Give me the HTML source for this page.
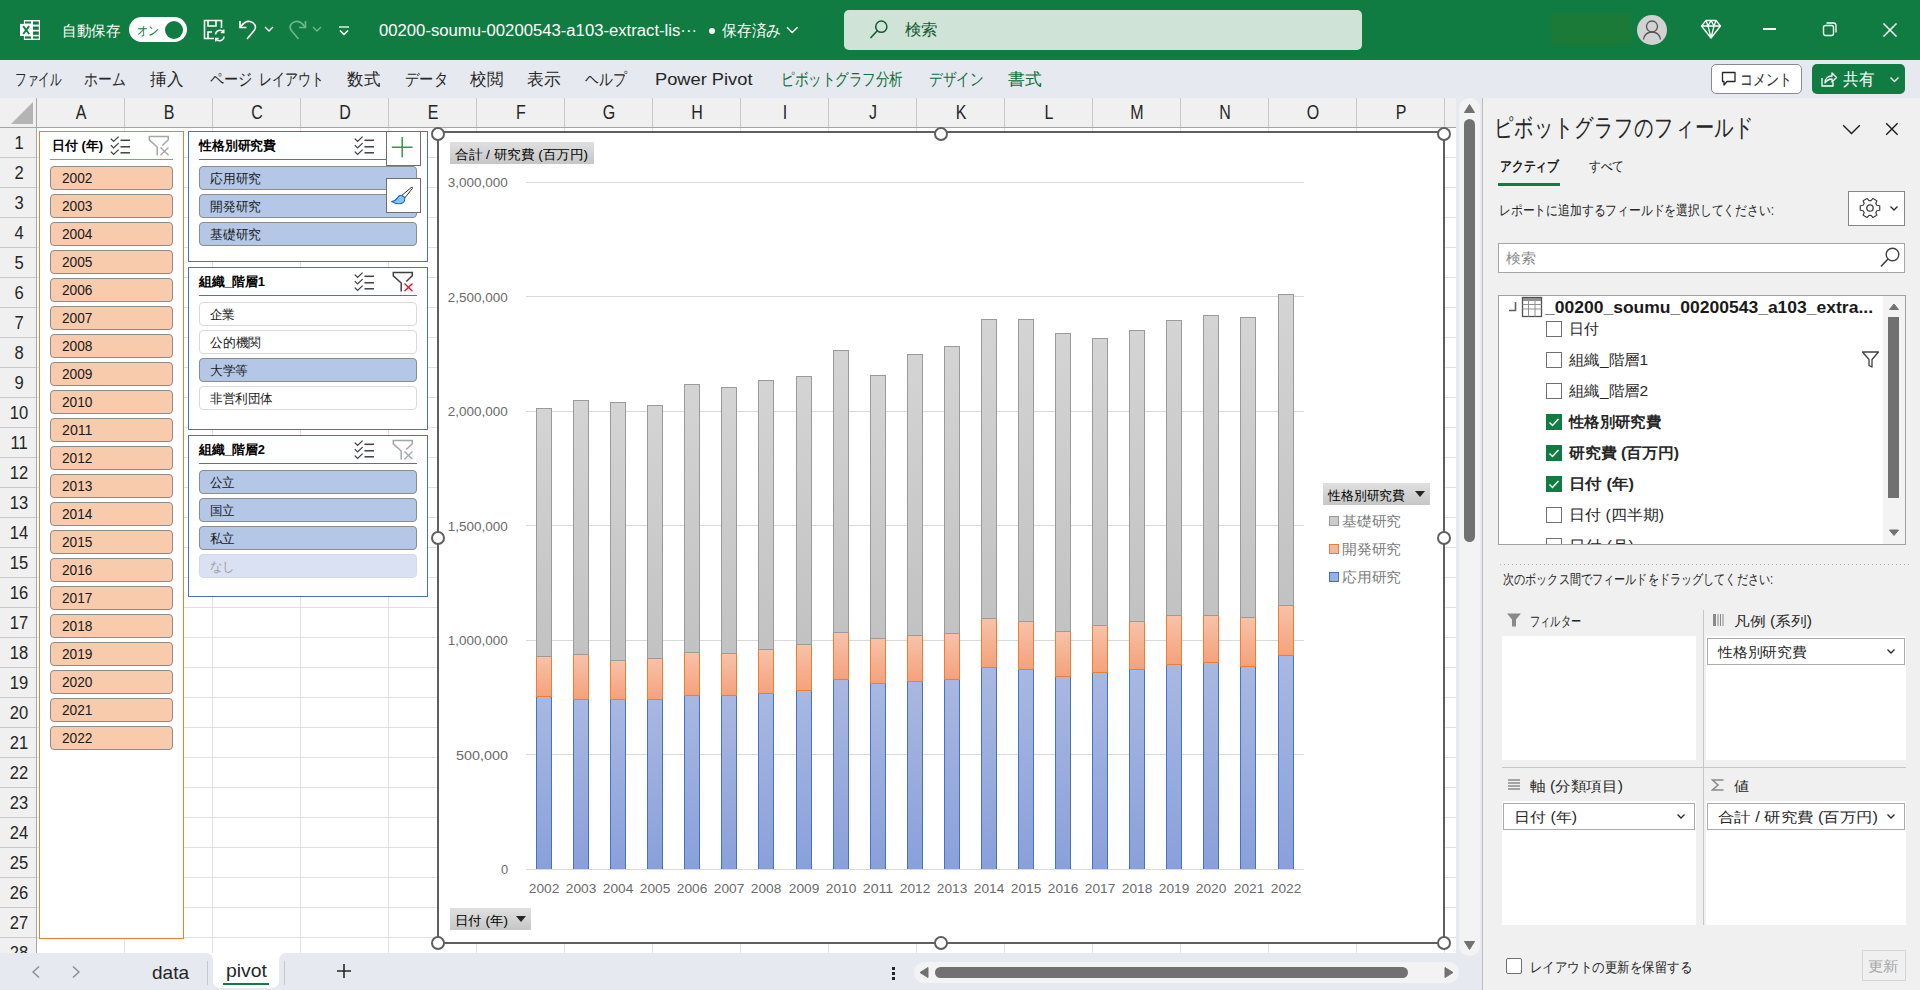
<!DOCTYPE html>
<html lang="ja"><head><meta charset="utf-8"><title>Excel pivot</title>
<style>
html,body{margin:0;padding:0;width:1920px;height:990px;overflow:hidden;background:#fff;font-family:'Liberation Sans', sans-serif;}
body>div{position:absolute;box-sizing:border-box;}
.t{white-space:nowrap;}
.t span{white-space:nowrap;}
</style></head><body>
<div style="left:0px;top:0px;width:1920px;height:60px;background:#117C41"></div>
<div style="left:0px;top:60px;width:1920px;height:38px;background:#E6E9EF"></div>
<div style="left:37px;top:128px;width:1419px;height:825px;background-color:#fff;background-image:repeating-linear-gradient(to right,transparent 0 87px,#E1E1E1 87px 88px),repeating-linear-gradient(to bottom,transparent 0 29px,#E1E1E1 29px 30px)"></div>
<div style="left:0px;top:98px;width:1456px;height:30px;background:#F0F0F0"></div>
<div style="left:37px;top:98px;width:1419px;height:29px;background-image:repeating-linear-gradient(to right,transparent 0 87px,#C8C8C8 87px 88px)"></div>
<div style="left:0px;top:127px;width:1456px;height:1px;background:#A6A6A6"></div>
<div style="left:0px;top:128px;width:36px;height:825px;background-color:#F0F0F0;background-image:repeating-linear-gradient(to bottom,transparent 0 29px,#C8C8C8 29px 30px)"></div>
<div style="left:36px;top:98px;width:1px;height:855px;background:#A6A6A6"></div>
<svg style="position:absolute;left:11px;top:102px;" width="23" height="23" viewBox="0 0 23 23"><path d="M22 0 L22 22 L0 22 Z" fill="#B4B4B4"/></svg>
<div id="t0" class="t" style="left:81px;width:0;display:flex;justify-content:center;top:99.0px;line-height:26px;font-size:20px;color:#262626;font-weight:normal;transform:scaleX(0.8)"><span>A</span></div>
<div id="t1" class="t" style="left:169px;width:0;display:flex;justify-content:center;top:99.0px;line-height:26px;font-size:20px;color:#262626;font-weight:normal;transform:scaleX(0.8)"><span>B</span></div>
<div id="t2" class="t" style="left:257px;width:0;display:flex;justify-content:center;top:99.0px;line-height:26px;font-size:20px;color:#262626;font-weight:normal;transform:scaleX(0.8)"><span>C</span></div>
<div id="t3" class="t" style="left:345px;width:0;display:flex;justify-content:center;top:99.0px;line-height:26px;font-size:20px;color:#262626;font-weight:normal;transform:scaleX(0.8)"><span>D</span></div>
<div id="t4" class="t" style="left:433px;width:0;display:flex;justify-content:center;top:99.0px;line-height:26px;font-size:20px;color:#262626;font-weight:normal;transform:scaleX(0.8)"><span>E</span></div>
<div id="t5" class="t" style="left:521px;width:0;display:flex;justify-content:center;top:99.0px;line-height:26px;font-size:20px;color:#262626;font-weight:normal;transform:scaleX(0.8)"><span>F</span></div>
<div id="t6" class="t" style="left:609px;width:0;display:flex;justify-content:center;top:99.0px;line-height:26px;font-size:20px;color:#262626;font-weight:normal;transform:scaleX(0.8)"><span>G</span></div>
<div id="t7" class="t" style="left:697px;width:0;display:flex;justify-content:center;top:99.0px;line-height:26px;font-size:20px;color:#262626;font-weight:normal;transform:scaleX(0.8)"><span>H</span></div>
<div id="t8" class="t" style="left:785px;width:0;display:flex;justify-content:center;top:99.0px;line-height:26px;font-size:20px;color:#262626;font-weight:normal;transform:scaleX(0.8)"><span>I</span></div>
<div id="t9" class="t" style="left:873px;width:0;display:flex;justify-content:center;top:99.0px;line-height:26px;font-size:20px;color:#262626;font-weight:normal;transform:scaleX(0.8)"><span>J</span></div>
<div id="t10" class="t" style="left:961px;width:0;display:flex;justify-content:center;top:99.0px;line-height:26px;font-size:20px;color:#262626;font-weight:normal;transform:scaleX(0.8)"><span>K</span></div>
<div id="t11" class="t" style="left:1049px;width:0;display:flex;justify-content:center;top:99.0px;line-height:26px;font-size:20px;color:#262626;font-weight:normal;transform:scaleX(0.8)"><span>L</span></div>
<div id="t12" class="t" style="left:1137px;width:0;display:flex;justify-content:center;top:99.0px;line-height:26px;font-size:20px;color:#262626;font-weight:normal;transform:scaleX(0.8)"><span>M</span></div>
<div id="t13" class="t" style="left:1225px;width:0;display:flex;justify-content:center;top:99.0px;line-height:26px;font-size:20px;color:#262626;font-weight:normal;transform:scaleX(0.8)"><span>N</span></div>
<div id="t14" class="t" style="left:1313px;width:0;display:flex;justify-content:center;top:99.0px;line-height:26px;font-size:20px;color:#262626;font-weight:normal;transform:scaleX(0.8)"><span>O</span></div>
<div id="t15" class="t" style="left:1401px;width:0;display:flex;justify-content:center;top:99.0px;line-height:26px;font-size:20px;color:#262626;font-weight:normal;transform:scaleX(0.8)"><span>P</span></div>
<div id="t16" class="t" style="left:18.5px;width:0;display:flex;justify-content:center;top:132.0px;line-height:23px;font-size:18px;color:#262626;font-weight:normal;transform:scaleX(0.92)"><span>1</span></div>
<div id="t17" class="t" style="left:18.5px;width:0;display:flex;justify-content:center;top:162.0px;line-height:23px;font-size:18px;color:#262626;font-weight:normal;transform:scaleX(0.92)"><span>2</span></div>
<div id="t18" class="t" style="left:18.5px;width:0;display:flex;justify-content:center;top:192.0px;line-height:23px;font-size:18px;color:#262626;font-weight:normal;transform:scaleX(0.92)"><span>3</span></div>
<div id="t19" class="t" style="left:18.5px;width:0;display:flex;justify-content:center;top:222.0px;line-height:23px;font-size:18px;color:#262626;font-weight:normal;transform:scaleX(0.92)"><span>4</span></div>
<div id="t20" class="t" style="left:18.5px;width:0;display:flex;justify-content:center;top:252.0px;line-height:23px;font-size:18px;color:#262626;font-weight:normal;transform:scaleX(0.92)"><span>5</span></div>
<div id="t21" class="t" style="left:18.5px;width:0;display:flex;justify-content:center;top:282.0px;line-height:23px;font-size:18px;color:#262626;font-weight:normal;transform:scaleX(0.92)"><span>6</span></div>
<div id="t22" class="t" style="left:18.5px;width:0;display:flex;justify-content:center;top:312.0px;line-height:23px;font-size:18px;color:#262626;font-weight:normal;transform:scaleX(0.92)"><span>7</span></div>
<div id="t23" class="t" style="left:18.5px;width:0;display:flex;justify-content:center;top:342.0px;line-height:23px;font-size:18px;color:#262626;font-weight:normal;transform:scaleX(0.92)"><span>8</span></div>
<div id="t24" class="t" style="left:18.5px;width:0;display:flex;justify-content:center;top:372.0px;line-height:23px;font-size:18px;color:#262626;font-weight:normal;transform:scaleX(0.92)"><span>9</span></div>
<div id="t25" class="t" style="left:18.5px;width:0;display:flex;justify-content:center;top:402.0px;line-height:23px;font-size:18px;color:#262626;font-weight:normal;transform:scaleX(0.92)"><span>10</span></div>
<div id="t26" class="t" style="left:18.5px;width:0;display:flex;justify-content:center;top:432.0px;line-height:23px;font-size:18px;color:#262626;font-weight:normal;transform:scaleX(0.92)"><span>11</span></div>
<div id="t27" class="t" style="left:18.5px;width:0;display:flex;justify-content:center;top:462.0px;line-height:23px;font-size:18px;color:#262626;font-weight:normal;transform:scaleX(0.92)"><span>12</span></div>
<div id="t28" class="t" style="left:18.5px;width:0;display:flex;justify-content:center;top:492.0px;line-height:23px;font-size:18px;color:#262626;font-weight:normal;transform:scaleX(0.92)"><span>13</span></div>
<div id="t29" class="t" style="left:18.5px;width:0;display:flex;justify-content:center;top:522.0px;line-height:23px;font-size:18px;color:#262626;font-weight:normal;transform:scaleX(0.92)"><span>14</span></div>
<div id="t30" class="t" style="left:18.5px;width:0;display:flex;justify-content:center;top:552.0px;line-height:23px;font-size:18px;color:#262626;font-weight:normal;transform:scaleX(0.92)"><span>15</span></div>
<div id="t31" class="t" style="left:18.5px;width:0;display:flex;justify-content:center;top:582.0px;line-height:23px;font-size:18px;color:#262626;font-weight:normal;transform:scaleX(0.92)"><span>16</span></div>
<div id="t32" class="t" style="left:18.5px;width:0;display:flex;justify-content:center;top:612.0px;line-height:23px;font-size:18px;color:#262626;font-weight:normal;transform:scaleX(0.92)"><span>17</span></div>
<div id="t33" class="t" style="left:18.5px;width:0;display:flex;justify-content:center;top:642.0px;line-height:23px;font-size:18px;color:#262626;font-weight:normal;transform:scaleX(0.92)"><span>18</span></div>
<div id="t34" class="t" style="left:18.5px;width:0;display:flex;justify-content:center;top:672.0px;line-height:23px;font-size:18px;color:#262626;font-weight:normal;transform:scaleX(0.92)"><span>19</span></div>
<div id="t35" class="t" style="left:18.5px;width:0;display:flex;justify-content:center;top:702.0px;line-height:23px;font-size:18px;color:#262626;font-weight:normal;transform:scaleX(0.92)"><span>20</span></div>
<div id="t36" class="t" style="left:18.5px;width:0;display:flex;justify-content:center;top:732.0px;line-height:23px;font-size:18px;color:#262626;font-weight:normal;transform:scaleX(0.92)"><span>21</span></div>
<div id="t37" class="t" style="left:18.5px;width:0;display:flex;justify-content:center;top:762.0px;line-height:23px;font-size:18px;color:#262626;font-weight:normal;transform:scaleX(0.92)"><span>22</span></div>
<div id="t38" class="t" style="left:18.5px;width:0;display:flex;justify-content:center;top:792.0px;line-height:23px;font-size:18px;color:#262626;font-weight:normal;transform:scaleX(0.92)"><span>23</span></div>
<div id="t39" class="t" style="left:18.5px;width:0;display:flex;justify-content:center;top:822.0px;line-height:23px;font-size:18px;color:#262626;font-weight:normal;transform:scaleX(0.92)"><span>24</span></div>
<div id="t40" class="t" style="left:18.5px;width:0;display:flex;justify-content:center;top:852.0px;line-height:23px;font-size:18px;color:#262626;font-weight:normal;transform:scaleX(0.92)"><span>25</span></div>
<div id="t41" class="t" style="left:18.5px;width:0;display:flex;justify-content:center;top:882.0px;line-height:23px;font-size:18px;color:#262626;font-weight:normal;transform:scaleX(0.92)"><span>26</span></div>
<div id="t42" class="t" style="left:18.5px;width:0;display:flex;justify-content:center;top:912.0px;line-height:23px;font-size:18px;color:#262626;font-weight:normal;transform:scaleX(0.92)"><span>27</span></div>
<div id="t43" class="t" style="left:18.5px;width:0;display:flex;justify-content:center;top:942.0px;line-height:23px;font-size:18px;color:#262626;font-weight:normal;transform:scaleX(0.92)"><span>28</span></div>
<div style="left:1456px;top:98px;width:26px;height:892px;background:#E6E9EF"></div>
<div style="left:1459px;top:98px;width:21px;height:858px;background:#F3F3F3;border-radius:10px"></div>
<div style="left:1464px;top:119px;width:11px;height:423px;background:#717171;border-radius:6px"></div>
<svg style="position:absolute;left:1463px;top:103px;" width="13" height="11" viewBox="0 0 13 11"><path d="M1.5 9.5 L6.5 1.5 L11.5 9.5 Z" fill="#717171" stroke="#717171" stroke-linejoin="round"/></svg>
<svg style="position:absolute;left:1463px;top:940px;" width="13" height="11" viewBox="0 0 13 11"><path d="M1.5 1.5 L6.5 9.5 L11.5 1.5 Z" fill="#717171" stroke="#717171" stroke-linejoin="round"/></svg>
<div style="left:0px;top:953px;width:213px;height:37px;background:#E6E9EF;border-top-right-radius:7px"></div>
<div style="left:279px;top:953px;width:1177px;height:37px;background:#E6E9EF;border-top-left-radius:7px"></div>
<div style="left:213px;top:953px;width:66px;height:37px;background:#E6E9EF"></div>
<svg style="position:absolute;left:20px;top:20px;" width="21" height="21" viewBox="0 0 21 21"><rect x="3.9" y="0" width="16.1" height="20" fill="#fff"/>
<rect x="0" y="3.9" width="11.8" height="12.1" fill="#fff"/>
<g fill="#117C41"><rect x="5" y="1.5" width="6" height="2"/><rect x="13" y="1.5" width="5.8" height="3.1"/><rect x="13" y="6.5" width="5.8" height="3.3"/><rect x="13" y="11.5" width="5.8" height="3.3"/><rect x="5" y="16.4" width="6" height="2.2"/><rect x="13" y="16.4" width="5.8" height="2.2"/></g>
<path d="M3.2 6.2 L9.2 14 M9.2 6.2 L3.2 14" stroke="#117C41" stroke-width="1.9"/></svg>
<div id="t44" class="t" style="left:62px;top:20.5px;line-height:20px;font-size:15px;color:#fff;font-weight:normal;transform:scaleX(0.9667);transform-origin:0 50%;"><span>自動保存</span></div>
<div style="left:129px;top:17px;width:58px;height:25px;background:#fff;border-radius:13px"></div>
<div style="left:165px;top:21px;width:18px;height:18px;background:#117C41;border-radius:50%"></div>
<div id="t45" class="t" style="left:137px;top:22.0px;line-height:17px;font-size:13px;color:#117C41;font-weight:normal;transform:scaleX(0.8462);transform-origin:0 50%;"><span>オン</span></div>
<svg style="position:absolute;left:202px;top:19px;" width="24" height="23" viewBox="0 0 24 23"><path d="M12 19.5 H2.5 V1.5 H19.5 V9" fill="none" stroke="#fff" stroke-width="1.6"/>
<path d="M6 1.5 V7 H14 V1.5" fill="none" stroke="#fff" stroke-width="1.6"/>
<path d="M6 19.5 V13 H10" fill="none" stroke="#fff" stroke-width="1.6"/>
<path d="M13.5 15.5 A4.5 4.5 0 0 1 21.5 13 M22 17.5 A4.5 4.5 0 0 1 14 20" fill="none" stroke="#fff" stroke-width="1.5"/>
<path d="M21.8 10.5 V13.5 H18.8 M13.7 22.5 V19.5 H16.7" fill="none" stroke="#fff" stroke-width="1.4"/></svg>
<svg style="position:absolute;left:237px;top:18px;" width="24" height="24" viewBox="0 0 24 24"><path d="M3 3 V9.5 H9.5" fill="none" stroke="#fff" stroke-width="1.6"/>
<path d="M3.5 9 C7 4 10 3 13 3.5 C17 4.5 20 8 17.5 12 L10 21" fill="none" stroke="#fff" stroke-width="1.6"/></svg>
<svg style="position:absolute;left:264px;top:25px;" width="10" height="8" viewBox="0 0 10 8"><path d="M1 2 L5 6 L9 2" fill="none" stroke="#fff" stroke-width="1.4"/></svg>
<svg style="position:absolute;left:285px;top:18px;" width="24" height="24" viewBox="0 0 24 24"><path d="M20.5 3 V9.5 H14" fill="none" stroke="#6FB68E" stroke-width="1.6"/>
<path d="M20 9 C16.5 4 13.5 3 10.5 3.5 C6.5 4.5 3.5 8 6 12 L13.5 21" fill="none" stroke="#6FB68E" stroke-width="1.6"/></svg>
<svg style="position:absolute;left:312px;top:25px;" width="10" height="8" viewBox="0 0 10 8"><path d="M1 2 L5 6 L9 2" fill="none" stroke="#6FB68E" stroke-width="1.4"/></svg>
<svg style="position:absolute;left:338px;top:26px;" width="12" height="10" viewBox="0 0 12 10"><path d="M1 1 H11" stroke="#fff" stroke-width="1.3"/><path d="M2 4.5 L6 8.5 L10 4.5" fill="none" stroke="#fff" stroke-width="1.4"/></svg>
<div id="t46" class="t" style="left:379px;top:20.0px;line-height:21px;font-size:16px;color:#fff;font-weight:normal;transform:scaleX(1.0425);transform-origin:0 50%;"><span>00200-soumu-00200543-a103-extract-lis···</span></div>
<div style="left:709px;top:27.5px;width:6.2px;height:6.2px;background:#fff;border-radius:50%"></div>
<div id="t47" class="t" style="left:721.5px;top:20.5px;line-height:20px;font-size:15.5px;color:#fff;font-weight:normal;transform:scaleX(0.9219);transform-origin:0 50%;"><span>保存済み</span></div>
<svg style="position:absolute;left:786px;top:26px;" width="13" height="9" viewBox="0 0 13 9"><path d="M1 1.2 L6.2 6.5 L11.6 1.2" fill="none" stroke="#fff" stroke-width="1.4"/></svg>
<div style="left:844px;top:10px;width:518px;height:40px;background:#CFE4D7;border-radius:5px"></div>
<svg style="position:absolute;left:868px;top:18px;" width="22" height="22" viewBox="0 0 22 22"><circle cx="13.3" cy="8.7" r="5.6" fill="none" stroke="#165A32" stroke-width="1.5"/><path d="M9.3 12.7 L2.5 20" stroke="#165A32" stroke-width="1.6"/></svg>
<div id="t48" class="t" style="left:905px;top:19.0px;line-height:21px;font-size:16px;color:#165A32;font-weight:normal;transform:scaleX(1.0312);transform-origin:0 50%;"><span>検索</span></div>
<div style="left:1551px;top:14px;width:80px;height:31px;background:#1B7A37"></div>
<div style="left:1637px;top:15px;width:30px;height:30px;background:#D2D2D2;border-radius:50%"></div>
<svg style="position:absolute;left:1637px;top:15px;" width="30" height="30" viewBox="0 0 30 30"><circle cx="15" cy="11.5" r="5.5" fill="none" stroke="#555" stroke-width="1.3"/><path d="M6.5 24.5 C7.5 19 11 17 15 17 C19 17 22.5 19 23.5 24.5" fill="none" stroke="#555" stroke-width="1.3"/></svg>
<svg style="position:absolute;left:1700px;top:19px;" width="22" height="21" viewBox="0 0 22 21"><path d="M1.5 7 L6 1.5 H16 L20.5 7 L11 19 Z M1.5 7 H20.5 M6 1.5 L8 7 L11 19 L14 7 L16 1.5 M11 1.5 L8 7 M11 1.5 L14 7" fill="none" stroke="#fff" stroke-width="1.3" stroke-linejoin="round"/></svg>
<div style="left:1763px;top:28px;width:13px;height:1.5px;background:#fff"></div>
<svg style="position:absolute;left:1822px;top:21px;" width="16" height="17" viewBox="0 0 16 17"><rect x="1.5" y="4.5" width="10" height="10" rx="2" fill="none" stroke="#fff" stroke-width="1.4"/><path d="M4.5 2 H11.5 Q14 2 14 4.5 V11.5" fill="none" stroke="#fff" stroke-width="1.3"/></svg>
<svg style="position:absolute;left:1882px;top:22px;" width="16" height="16" viewBox="0 0 16 16"><path d="M1.5 1.5 L14.5 14.5 M14.5 1.5 L1.5 14.5" stroke="#fff" stroke-width="1.5"/></svg>
<div id="t49" class="t" style="left:15px;top:68.5px;line-height:22px;font-size:17px;color:#262626;font-weight:normal;transform:scaleX(0.6838);transform-origin:0 50%;"><span>ファイル</span></div>
<div id="t50" class="t" style="left:84px;top:68.5px;line-height:22px;font-size:17px;color:#262626;font-weight:normal;transform:scaleX(0.8137);transform-origin:0 50%;"><span>ホーム</span></div>
<div id="t51" class="t" style="left:150px;top:68.5px;line-height:22px;font-size:17px;color:#262626;font-weight:normal;transform:scaleX(0.9706);transform-origin:0 50%;"><span>挿入</span></div>
<div id="t52" class="t" style="left:209.5px;top:68.5px;line-height:22px;font-size:17px;color:#262626;font-weight:normal;transform:scaleX(0.8333);transform-origin:0 50%;"><span>ページ</span></div>
<div id="t53" class="t" style="left:258.5px;top:68.5px;line-height:22px;font-size:17px;color:#262626;font-weight:normal;transform:scaleX(0.7647);transform-origin:0 50%;"><span>レイアウト</span></div>
<div id="t54" class="t" style="left:347px;top:68.5px;line-height:22px;font-size:17px;color:#262626;font-weight:normal;transform:scaleX(0.9706);transform-origin:0 50%;"><span>数式</span></div>
<div id="t55" class="t" style="left:404.5px;top:68.5px;line-height:22px;font-size:17px;color:#262626;font-weight:normal;transform:scaleX(0.8431);transform-origin:0 50%;"><span>データ</span></div>
<div id="t56" class="t" style="left:470px;top:68.5px;line-height:22px;font-size:17px;color:#262626;font-weight:normal;transform:scaleX(0.9706);transform-origin:0 50%;"><span>校閲</span></div>
<div id="t57" class="t" style="left:527px;top:68.5px;line-height:22px;font-size:17px;color:#262626;font-weight:normal;transform:scaleX(0.9853);transform-origin:0 50%;"><span>表示</span></div>
<div id="t58" class="t" style="left:585px;top:68.5px;line-height:22px;font-size:17px;color:#262626;font-weight:normal;transform:scaleX(0.8137);transform-origin:0 50%;"><span>ヘルプ</span></div>
<div id="t59" class="t" style="left:655px;top:68.5px;line-height:22px;font-size:17px;color:#262626;font-weight:normal;transform:scaleX(1.0749);transform-origin:0 50%;"><span>Power Pivot</span></div>
<div id="t60" class="t" style="left:780.5px;top:68.5px;line-height:22px;font-size:17px;color:#0C6E38;font-weight:normal;transform:scaleX(0.7974);transform-origin:0 50%;"><span>ピボットグラフ分析</span></div>
<div id="t61" class="t" style="left:929px;top:68.5px;line-height:22px;font-size:17px;color:#0C6E38;font-weight:normal;transform:scaleX(0.8015);transform-origin:0 50%;"><span>デザイン</span></div>
<div id="t62" class="t" style="left:1008px;top:68.5px;line-height:22px;font-size:17px;color:#0C6E38;font-weight:normal;transform:scaleX(0.9853);transform-origin:0 50%;"><span>書式</span></div>
<div style="left:1711px;top:64px;width:91px;height:30px;background:#fff;border:1px solid #8A8A8A;border-radius:5px"></div>
<svg style="position:absolute;left:1720px;top:70px;" width="18" height="18" viewBox="0 0 18 18"><path d="M2.5 2.5 H15 V11.5 H7 L4 15 V11.5 H2.5 Z" fill="none" stroke="#262626" stroke-width="1.3" stroke-linejoin="round"/></svg>
<div id="t63" class="t" style="left:1740px;top:69.0px;line-height:21px;font-size:16px;color:#262626;font-weight:normal;transform:scaleX(0.8125);transform-origin:0 50%;"><span>コメント</span></div>
<div style="left:1812px;top:64px;width:93px;height:30px;background:#117C41;border-radius:5px"></div>
<svg style="position:absolute;left:1820px;top:70px;" width="18" height="18" viewBox="0 0 18 18"><path d="M2 8 V16 H13 V12" fill="none" stroke="#fff" stroke-width="1.3"/><path d="M5 13 C5 8 8 6 12 6 V3 L16.5 7.5 L12 12 V9 C9 9 7 10 5 13 Z" fill="none" stroke="#fff" stroke-width="1.3" stroke-linejoin="round"/></svg>
<div id="t64" class="t" style="left:1843px;top:68.5px;line-height:22px;font-size:17px;color:#fff;font-weight:normal;transform:scaleX(0.9118);transform-origin:0 50%;"><span>共有</span></div>
<svg style="position:absolute;left:1889px;top:76px;" width="11" height="8" viewBox="0 0 11 8"><path d="M1.5 1.5 L5.5 5.5 L9.5 1.5" fill="none" stroke="#fff" stroke-width="1.4"/></svg>
<div style="left:39px;top:131px;width:145px;height:808px;background:#fff;border:1px solid #ED7D31"></div>
<div id="t65" class="t" style="left:51.5px;top:136.8px;line-height:17px;font-size:13px;color:#000;font-weight:bold;transform:scaleX(0.9945);transform-origin:0 50%;"><span>日付 (年)</span></div>
<svg style="position:absolute;left:110px;top:136px;" width="21" height="20" viewBox="0 0 21 20"><g fill="none" stroke="#404040" stroke-width="1.3"><path d="M0.8 2.6 L3.6 5.4 L8.6 0.6"/><path d="M0.8 9.1 L3.6 11.9 L8.6 7.1"/><path d="M0.8 15.6 L3.6 18.4 L8.6 13.6"/></g><g stroke="#404040" stroke-width="1.5"><path d="M10.5 4.3 H20"/><path d="M10.5 10.8 H20"/><path d="M10.5 16.8 H20"/></g></svg>
<svg style="position:absolute;left:148px;top:135px;" width="22" height="22" viewBox="0 0 22 22"><path d="M14.3 10.5 L20.3 4.8 V1.5 H1.3 V4.8 L9.2 12 V20.5" fill="none" stroke="#A6A6A6" stroke-width="1.5" stroke-linejoin="miter"/><path d="M12.5 12.5 L20.5 20.3 M20.5 12.5 L12.5 20.3" stroke="#A6A6A6" stroke-width="1.3"/></svg>
<div style="left:50px;top:159px;width:123px;height:1px;background:#ED7D31"></div>
<div style="left:50px;top:166px;width:123px;height:24px;background:#F8CBAD;border:1px solid #8C8C8C;border-radius:4px"></div>
<div id="t66" class="t" style="left:61.5px;top:169.0px;line-height:19px;font-size:14.5px;color:#1A1A1A;font-weight:normal;transform:scaleX(0.9453);transform-origin:0 50%;"><span>2002</span></div>
<div style="left:50px;top:194px;width:123px;height:24px;background:#F8CBAD;border:1px solid #8C8C8C;border-radius:4px"></div>
<div id="t67" class="t" style="left:61.5px;top:197.0px;line-height:19px;font-size:14.5px;color:#1A1A1A;font-weight:normal;transform:scaleX(0.9453);transform-origin:0 50%;"><span>2003</span></div>
<div style="left:50px;top:222px;width:123px;height:24px;background:#F8CBAD;border:1px solid #8C8C8C;border-radius:4px"></div>
<div id="t68" class="t" style="left:61.5px;top:225.0px;line-height:19px;font-size:14.5px;color:#1A1A1A;font-weight:normal;transform:scaleX(0.9453);transform-origin:0 50%;"><span>2004</span></div>
<div style="left:50px;top:250px;width:123px;height:24px;background:#F8CBAD;border:1px solid #8C8C8C;border-radius:4px"></div>
<div id="t69" class="t" style="left:61.5px;top:253.0px;line-height:19px;font-size:14.5px;color:#1A1A1A;font-weight:normal;transform:scaleX(0.9453);transform-origin:0 50%;"><span>2005</span></div>
<div style="left:50px;top:278px;width:123px;height:24px;background:#F8CBAD;border:1px solid #8C8C8C;border-radius:4px"></div>
<div id="t70" class="t" style="left:61.5px;top:281.0px;line-height:19px;font-size:14.5px;color:#1A1A1A;font-weight:normal;transform:scaleX(0.9453);transform-origin:0 50%;"><span>2006</span></div>
<div style="left:50px;top:306px;width:123px;height:24px;background:#F8CBAD;border:1px solid #8C8C8C;border-radius:4px"></div>
<div id="t71" class="t" style="left:61.5px;top:309.0px;line-height:19px;font-size:14.5px;color:#1A1A1A;font-weight:normal;transform:scaleX(0.9453);transform-origin:0 50%;"><span>2007</span></div>
<div style="left:50px;top:334px;width:123px;height:24px;background:#F8CBAD;border:1px solid #8C8C8C;border-radius:4px"></div>
<div id="t72" class="t" style="left:61.5px;top:337.0px;line-height:19px;font-size:14.5px;color:#1A1A1A;font-weight:normal;transform:scaleX(0.9453);transform-origin:0 50%;"><span>2008</span></div>
<div style="left:50px;top:362px;width:123px;height:24px;background:#F8CBAD;border:1px solid #8C8C8C;border-radius:4px"></div>
<div id="t73" class="t" style="left:61.5px;top:365.0px;line-height:19px;font-size:14.5px;color:#1A1A1A;font-weight:normal;transform:scaleX(0.9453);transform-origin:0 50%;"><span>2009</span></div>
<div style="left:50px;top:390px;width:123px;height:24px;background:#F8CBAD;border:1px solid #8C8C8C;border-radius:4px"></div>
<div id="t74" class="t" style="left:61.5px;top:393.0px;line-height:19px;font-size:14.5px;color:#1A1A1A;font-weight:normal;transform:scaleX(0.9453);transform-origin:0 50%;"><span>2010</span></div>
<div style="left:50px;top:418px;width:123px;height:24px;background:#F8CBAD;border:1px solid #8C8C8C;border-radius:4px"></div>
<div id="t75" class="t" style="left:61.5px;top:421.0px;line-height:19px;font-size:14.5px;color:#1A1A1A;font-weight:normal;transform:scaleX(0.9780);transform-origin:0 50%;"><span>2011</span></div>
<div style="left:50px;top:446px;width:123px;height:24px;background:#F8CBAD;border:1px solid #8C8C8C;border-radius:4px"></div>
<div id="t76" class="t" style="left:61.5px;top:449.0px;line-height:19px;font-size:14.5px;color:#1A1A1A;font-weight:normal;transform:scaleX(0.9453);transform-origin:0 50%;"><span>2012</span></div>
<div style="left:50px;top:474px;width:123px;height:24px;background:#F8CBAD;border:1px solid #8C8C8C;border-radius:4px"></div>
<div id="t77" class="t" style="left:61.5px;top:477.0px;line-height:19px;font-size:14.5px;color:#1A1A1A;font-weight:normal;transform:scaleX(0.9453);transform-origin:0 50%;"><span>2013</span></div>
<div style="left:50px;top:502px;width:123px;height:24px;background:#F8CBAD;border:1px solid #8C8C8C;border-radius:4px"></div>
<div id="t78" class="t" style="left:61.5px;top:505.0px;line-height:19px;font-size:14.5px;color:#1A1A1A;font-weight:normal;transform:scaleX(0.9453);transform-origin:0 50%;"><span>2014</span></div>
<div style="left:50px;top:530px;width:123px;height:24px;background:#F8CBAD;border:1px solid #8C8C8C;border-radius:4px"></div>
<div id="t79" class="t" style="left:61.5px;top:533.0px;line-height:19px;font-size:14.5px;color:#1A1A1A;font-weight:normal;transform:scaleX(0.9453);transform-origin:0 50%;"><span>2015</span></div>
<div style="left:50px;top:558px;width:123px;height:24px;background:#F8CBAD;border:1px solid #8C8C8C;border-radius:4px"></div>
<div id="t80" class="t" style="left:61.5px;top:561.0px;line-height:19px;font-size:14.5px;color:#1A1A1A;font-weight:normal;transform:scaleX(0.9453);transform-origin:0 50%;"><span>2016</span></div>
<div style="left:50px;top:586px;width:123px;height:24px;background:#F8CBAD;border:1px solid #8C8C8C;border-radius:4px"></div>
<div id="t81" class="t" style="left:61.5px;top:589.0px;line-height:19px;font-size:14.5px;color:#1A1A1A;font-weight:normal;transform:scaleX(0.9453);transform-origin:0 50%;"><span>2017</span></div>
<div style="left:50px;top:614px;width:123px;height:24px;background:#F8CBAD;border:1px solid #8C8C8C;border-radius:4px"></div>
<div id="t82" class="t" style="left:61.5px;top:617.0px;line-height:19px;font-size:14.5px;color:#1A1A1A;font-weight:normal;transform:scaleX(0.9453);transform-origin:0 50%;"><span>2018</span></div>
<div style="left:50px;top:642px;width:123px;height:24px;background:#F8CBAD;border:1px solid #8C8C8C;border-radius:4px"></div>
<div id="t83" class="t" style="left:61.5px;top:645.0px;line-height:19px;font-size:14.5px;color:#1A1A1A;font-weight:normal;transform:scaleX(0.9453);transform-origin:0 50%;"><span>2019</span></div>
<div style="left:50px;top:670px;width:123px;height:24px;background:#F8CBAD;border:1px solid #8C8C8C;border-radius:4px"></div>
<div id="t84" class="t" style="left:61.5px;top:673.0px;line-height:19px;font-size:14.5px;color:#1A1A1A;font-weight:normal;transform:scaleX(0.9453);transform-origin:0 50%;"><span>2020</span></div>
<div style="left:50px;top:698px;width:123px;height:24px;background:#F8CBAD;border:1px solid #8C8C8C;border-radius:4px"></div>
<div id="t85" class="t" style="left:61.5px;top:701.0px;line-height:19px;font-size:14.5px;color:#1A1A1A;font-weight:normal;transform:scaleX(0.9453);transform-origin:0 50%;"><span>2021</span></div>
<div style="left:50px;top:726px;width:123px;height:24px;background:#F8CBAD;border:1px solid #8C8C8C;border-radius:4px"></div>
<div id="t86" class="t" style="left:61.5px;top:729.0px;line-height:19px;font-size:14.5px;color:#1A1A1A;font-weight:normal;transform:scaleX(0.9453);transform-origin:0 50%;"><span>2022</span></div>
<div style="left:188px;top:131px;width:240px;height:131px;background:#fff;border:1px solid #4472C4"></div>
<div id="t87" class="t" style="left:199px;top:136.5px;line-height:17px;font-size:13px;color:#000;font-weight:bold;transform:scaleX(0.9872);transform-origin:0 50%;"><span>性格別研究費</span></div>
<svg style="position:absolute;left:354px;top:136px;" width="21" height="20" viewBox="0 0 21 20"><g fill="none" stroke="#404040" stroke-width="1.3"><path d="M0.8 2.6 L3.6 5.4 L8.6 0.6"/><path d="M0.8 9.1 L3.6 11.9 L8.6 7.1"/><path d="M0.8 15.6 L3.6 18.4 L8.6 13.6"/></g><g stroke="#404040" stroke-width="1.5"><path d="M10.5 4.3 H20"/><path d="M10.5 10.8 H20"/><path d="M10.5 16.8 H20"/></g></svg>
<div style="left:199px;top:159px;width:218px;height:1px;background:#4472C4"></div>
<div style="left:199px;top:166px;width:218px;height:24px;background:#B4C7E7;border:1px solid #8C8C8C;border-radius:4px"></div>
<div id="t88" class="t" style="left:210px;top:169.5px;line-height:17px;font-size:13px;color:#1A1A1A;font-weight:normal;transform:scaleX(0.9808);transform-origin:0 50%;"><span>応用研究</span></div>
<div style="left:199px;top:194px;width:218px;height:24px;background:#B4C7E7;border:1px solid #8C8C8C;border-radius:4px"></div>
<div id="t89" class="t" style="left:210px;top:197.5px;line-height:17px;font-size:13px;color:#1A1A1A;font-weight:normal;transform:scaleX(0.9808);transform-origin:0 50%;"><span>開発研究</span></div>
<div style="left:199px;top:222px;width:218px;height:24px;background:#B4C7E7;border:1px solid #8C8C8C;border-radius:4px"></div>
<div id="t90" class="t" style="left:210px;top:225.5px;line-height:17px;font-size:13px;color:#1A1A1A;font-weight:normal;transform:scaleX(0.9808);transform-origin:0 50%;"><span>基礎研究</span></div>
<div style="left:188px;top:267px;width:240px;height:163px;background:#fff;border:1px solid #4472C4"></div>
<div id="t91" class="t" style="left:199px;top:272.5px;line-height:17px;font-size:13px;color:#000;font-weight:bold;transform:scaleX(0.9929);transform-origin:0 50%;"><span>組織_階層1</span></div>
<svg style="position:absolute;left:354px;top:272px;" width="21" height="20" viewBox="0 0 21 20"><g fill="none" stroke="#404040" stroke-width="1.3"><path d="M0.8 2.6 L3.6 5.4 L8.6 0.6"/><path d="M0.8 9.1 L3.6 11.9 L8.6 7.1"/><path d="M0.8 15.6 L3.6 18.4 L8.6 13.6"/></g><g stroke="#404040" stroke-width="1.5"><path d="M10.5 4.3 H20"/><path d="M10.5 10.8 H20"/><path d="M10.5 16.8 H20"/></g></svg>
<svg style="position:absolute;left:392px;top:271px;" width="22" height="22" viewBox="0 0 22 22"><path d="M14.3 10.5 L20.3 4.8 V1.5 H1.3 V4.8 L9.2 12 V20.5" fill="none" stroke="#404040" stroke-width="1.5" stroke-linejoin="miter"/><path d="M12.5 12.5 L20.5 20.3 M20.5 12.5 L12.5 20.3" stroke="#E81123" stroke-width="1.3"/></svg>
<div style="left:199px;top:295px;width:218px;height:1px;background:#4472C4"></div>
<div style="left:199px;top:302px;width:218px;height:24px;background:#fff;border:1px solid #D9D9D9;border-radius:4px"></div>
<div id="t92" class="t" style="left:210px;top:305.5px;line-height:17px;font-size:13px;color:#1A1A1A;font-weight:normal;transform:scaleX(0.9615);transform-origin:0 50%;"><span>企業</span></div>
<div style="left:199px;top:330px;width:218px;height:24px;background:#fff;border:1px solid #D9D9D9;border-radius:4px"></div>
<div id="t93" class="t" style="left:210px;top:333.5px;line-height:17px;font-size:13px;color:#1A1A1A;font-weight:normal;transform:scaleX(0.9808);transform-origin:0 50%;"><span>公的機関</span></div>
<div style="left:199px;top:358px;width:218px;height:24px;background:#B4C7E7;border:1px solid #8C8C8C;border-radius:4px"></div>
<div id="t94" class="t" style="left:210px;top:361.5px;line-height:17px;font-size:13px;color:#1A1A1A;font-weight:normal;transform:scaleX(0.9744);transform-origin:0 50%;"><span>大学等</span></div>
<div style="left:199px;top:386px;width:218px;height:24px;background:#fff;border:1px solid #D9D9D9;border-radius:4px"></div>
<div id="t95" class="t" style="left:210px;top:389.5px;line-height:17px;font-size:13px;color:#1A1A1A;font-weight:normal;transform:scaleX(0.9692);transform-origin:0 50%;"><span>非営利団体</span></div>
<div style="left:188px;top:435px;width:240px;height:162px;background:#fff;border:1px solid #4472C4"></div>
<div id="t96" class="t" style="left:199px;top:440.5px;line-height:17px;font-size:13px;color:#000;font-weight:bold;transform:scaleX(0.9929);transform-origin:0 50%;"><span>組織_階層2</span></div>
<svg style="position:absolute;left:354px;top:440px;" width="21" height="20" viewBox="0 0 21 20"><g fill="none" stroke="#404040" stroke-width="1.3"><path d="M0.8 2.6 L3.6 5.4 L8.6 0.6"/><path d="M0.8 9.1 L3.6 11.9 L8.6 7.1"/><path d="M0.8 15.6 L3.6 18.4 L8.6 13.6"/></g><g stroke="#404040" stroke-width="1.5"><path d="M10.5 4.3 H20"/><path d="M10.5 10.8 H20"/><path d="M10.5 16.8 H20"/></g></svg>
<svg style="position:absolute;left:392px;top:439px;" width="22" height="22" viewBox="0 0 22 22"><path d="M14.3 10.5 L20.3 4.8 V1.5 H1.3 V4.8 L9.2 12 V20.5" fill="none" stroke="#A6A6A6" stroke-width="1.5" stroke-linejoin="miter"/><path d="M12.5 12.5 L20.5 20.3 M20.5 12.5 L12.5 20.3" stroke="#A6A6A6" stroke-width="1.3"/></svg>
<div style="left:199px;top:463px;width:218px;height:1px;background:#4472C4"></div>
<div style="left:199px;top:470px;width:218px;height:24px;background:#B4C7E7;border:1px solid #8C8C8C;border-radius:4px"></div>
<div id="t97" class="t" style="left:210px;top:473.5px;line-height:17px;font-size:13px;color:#1A1A1A;font-weight:normal;transform:scaleX(0.9615);transform-origin:0 50%;"><span>公立</span></div>
<div style="left:199px;top:498px;width:218px;height:24px;background:#B4C7E7;border:1px solid #8C8C8C;border-radius:4px"></div>
<div id="t98" class="t" style="left:210px;top:501.5px;line-height:17px;font-size:13px;color:#1A1A1A;font-weight:normal;transform:scaleX(0.9615);transform-origin:0 50%;"><span>国立</span></div>
<div style="left:199px;top:526px;width:218px;height:24px;background:#B4C7E7;border:1px solid #8C8C8C;border-radius:4px"></div>
<div id="t99" class="t" style="left:210px;top:529.5px;line-height:17px;font-size:13px;color:#1A1A1A;font-weight:normal;transform:scaleX(0.9615);transform-origin:0 50%;"><span>私立</span></div>
<div style="left:199px;top:554px;width:218px;height:24px;background:#DAE1F3;border:1px solid #D3D9E6;border-radius:4px"></div>
<div id="t100" class="t" style="left:210px;top:557.5px;line-height:17px;font-size:13px;color:#A0A0A0;font-weight:normal;transform:scaleX(0.9615);transform-origin:0 50%;"><span>なし</span></div>
<div style="left:386px;top:131px;width:35px;height:35px;background:#fff;border:1px solid #6E6E6E"></div>
<svg style="position:absolute;left:386px;top:131px;" width="35" height="35" viewBox="0 0 35 35"><path d="M16.2 6 V26.6 M5.8 16.3 H26.6" stroke="#2E9B4E" stroke-width="1.5"/></svg>
<div style="left:386px;top:178px;width:35px;height:35px;background:#fff;border:1px solid #6E6E6E"></div>
<svg style="position:absolute;left:386px;top:178px;" width="35" height="35" viewBox="0 0 35 35"><path d="M15.6 17.6 L25.2 9.6 Q26.8 8.6 26.4 10.4 L18.6 20.2 Z" fill="#fff" stroke="#333" stroke-width="1" stroke-linejoin="round"/><path d="M18.8 20.4 C19.2 23.6 16.6 25.8 12.8 25.8 C10.2 25.8 7.8 25 5.6 23.6 C8.6 23.2 10.2 21.8 11.6 19.6 C12.8 17.8 14.6 17.2 15.8 17.6 C17.2 18 18.6 19 18.8 20.4 Z" fill="#8DC2EE" stroke="#1570C6" stroke-width="1.1" stroke-linejoin="round"/></svg>
<div style="left:437px;top:131px;width:1008px;height:813px;background:#fff;border:2px solid #5F5F5F"></div>
<div style="left:450px;top:142px;width:144px;height:22px;background:linear-gradient(#E0E0E0,#C6C6C6)"></div>
<div id="t101" class="t" style="left:454.5px;top:146.0px;line-height:17px;font-size:13px;color:#000;font-weight:normal;transform:scaleX(1.0463);transform-origin:0 50%;"><span>合計 / 研究費 (百万円)</span></div>
<div style="left:450px;top:908px;width:81px;height:22px;background:linear-gradient(#E0E0E0,#C6C6C6)"></div>
<div id="t102" class="t" style="left:454.5px;top:912.0px;line-height:17px;font-size:13px;color:#000;font-weight:normal;transform:scaleX(1.0335);transform-origin:0 50%;"><span>日付 (年)</span></div>
<svg style="position:absolute;left:516px;top:916.0px;" width="10" height="6" viewBox="0 0 10 6"><path d="M0 0 H10 L5 6 Z" fill="#262626"/></svg>
<div style="left:1323px;top:483px;width:107px;height:22px;background:linear-gradient(#E0E0E0,#C6C6C6)"></div>
<div id="t103" class="t" style="left:1327.5px;top:487.0px;line-height:17px;font-size:13px;color:#000;font-weight:normal;transform:scaleX(0.9872);transform-origin:0 50%;"><span>性格別研究費</span></div>
<svg style="position:absolute;left:1415px;top:491.0px;" width="10" height="6" viewBox="0 0 10 6"><path d="M0 0 H10 L5 6 Z" fill="#262626"/></svg>
<div style="left:525.5px;top:869px;width:778px;height:1px;background:#D9D9D9"></div>
<div id="t104" class="t" style="right:1412px;top:861.0px;line-height:17px;font-size:13px;color:#6A6A6A;font-weight:normal;transform:scaleX(0.9952);transform-origin:100% 50%;"><span>0</span></div>
<div style="left:525.5px;top:754px;width:778px;height:1px;background:#D9D9D9"></div>
<div id="t105" class="t" style="right:1412px;top:746.5px;line-height:17px;font-size:13px;color:#6A6A6A;font-weight:normal;transform:scaleX(1.1064);transform-origin:100% 50%;"><span>500,000</span></div>
<div style="left:525.5px;top:640px;width:778px;height:1px;background:#D9D9D9"></div>
<div id="t106" class="t" style="right:1412px;top:632.0px;line-height:17px;font-size:13px;color:#6A6A6A;font-weight:normal;transform:scaleX(1.0373);transform-origin:100% 50%;"><span>1,000,000</span></div>
<div style="left:525.5px;top:525px;width:778px;height:1px;background:#D9D9D9"></div>
<div id="t107" class="t" style="right:1412px;top:517.5px;line-height:17px;font-size:13px;color:#6A6A6A;font-weight:normal;transform:scaleX(1.0373);transform-origin:100% 50%;"><span>1,500,000</span></div>
<div style="left:525.5px;top:411px;width:778px;height:1px;background:#D9D9D9"></div>
<div id="t108" class="t" style="right:1412px;top:403.0px;line-height:17px;font-size:13px;color:#6A6A6A;font-weight:normal;transform:scaleX(1.0373);transform-origin:100% 50%;"><span>2,000,000</span></div>
<div style="left:525.5px;top:296px;width:778px;height:1px;background:#D9D9D9"></div>
<div id="t109" class="t" style="right:1412px;top:288.5px;line-height:17px;font-size:13px;color:#6A6A6A;font-weight:normal;transform:scaleX(1.0373);transform-origin:100% 50%;"><span>2,500,000</span></div>
<div style="left:525.5px;top:182px;width:778px;height:1px;background:#D9D9D9"></div>
<div id="t110" class="t" style="right:1412px;top:174.0px;line-height:17px;font-size:13px;color:#6A6A6A;font-weight:normal;transform:scaleX(1.0373);transform-origin:100% 50%;"><span>3,000,000</span></div>
<div style="left:536px;top:696px;width:16px;height:173px;background:linear-gradient(#A9B8E1,#8AA0DA);border:1px solid #4472C4;border-bottom:none"></div>
<div style="left:536px;top:656px;width:16px;height:41px;background:linear-gradient(#F7C2A9,#F4A27C);border:1px solid #ED7D31"></div>
<div style="left:536px;top:408px;width:16px;height:249px;background:linear-gradient(#D4D4D4,#C2C2C2);border:1px solid #9A9A9A"></div>
<div id="t111" class="t" style="left:543.9px;width:0;display:flex;justify-content:center;top:880.0px;line-height:17px;font-size:13px;color:#6A6A6A;font-weight:normal;transform:scaleX(1.0546);transform-origin:50% 50%;"><span>2002</span></div>
<div style="left:573px;top:699px;width:16px;height:170px;background:linear-gradient(#A9B8E1,#8AA0DA);border:1px solid #4472C4;border-bottom:none"></div>
<div style="left:573px;top:654px;width:16px;height:46px;background:linear-gradient(#F7C2A9,#F4A27C);border:1px solid #ED7D31"></div>
<div style="left:573px;top:400px;width:16px;height:255px;background:linear-gradient(#D4D4D4,#C2C2C2);border:1px solid #9A9A9A"></div>
<div id="t112" class="t" style="left:581.0px;width:0;display:flex;justify-content:center;top:880.0px;line-height:17px;font-size:13px;color:#6A6A6A;font-weight:normal;transform:scaleX(1.0546);transform-origin:50% 50%;"><span>2003</span></div>
<div style="left:610px;top:699px;width:16px;height:170px;background:linear-gradient(#A9B8E1,#8AA0DA);border:1px solid #4472C4;border-bottom:none"></div>
<div style="left:610px;top:660px;width:16px;height:40px;background:linear-gradient(#F7C2A9,#F4A27C);border:1px solid #ED7D31"></div>
<div style="left:610px;top:402px;width:16px;height:259px;background:linear-gradient(#D4D4D4,#C2C2C2);border:1px solid #9A9A9A"></div>
<div id="t113" class="t" style="left:618.1px;width:0;display:flex;justify-content:center;top:880.0px;line-height:17px;font-size:13px;color:#6A6A6A;font-weight:normal;transform:scaleX(1.0546);transform-origin:50% 50%;"><span>2004</span></div>
<div style="left:647px;top:699px;width:16px;height:170px;background:linear-gradient(#A9B8E1,#8AA0DA);border:1px solid #4472C4;border-bottom:none"></div>
<div style="left:647px;top:658px;width:16px;height:42px;background:linear-gradient(#F7C2A9,#F4A27C);border:1px solid #ED7D31"></div>
<div style="left:647px;top:405px;width:16px;height:254px;background:linear-gradient(#D4D4D4,#C2C2C2);border:1px solid #9A9A9A"></div>
<div id="t114" class="t" style="left:655.2px;width:0;display:flex;justify-content:center;top:880.0px;line-height:17px;font-size:13px;color:#6A6A6A;font-weight:normal;transform:scaleX(1.0546);transform-origin:50% 50%;"><span>2005</span></div>
<div style="left:684px;top:695px;width:16px;height:174px;background:linear-gradient(#A9B8E1,#8AA0DA);border:1px solid #4472C4;border-bottom:none"></div>
<div style="left:684px;top:652px;width:16px;height:44px;background:linear-gradient(#F7C2A9,#F4A27C);border:1px solid #ED7D31"></div>
<div style="left:684px;top:384px;width:16px;height:269px;background:linear-gradient(#D4D4D4,#C2C2C2);border:1px solid #9A9A9A"></div>
<div id="t115" class="t" style="left:692.3px;width:0;display:flex;justify-content:center;top:880.0px;line-height:17px;font-size:13px;color:#6A6A6A;font-weight:normal;transform:scaleX(1.0546);transform-origin:50% 50%;"><span>2006</span></div>
<div style="left:721px;top:695px;width:16px;height:174px;background:linear-gradient(#A9B8E1,#8AA0DA);border:1px solid #4472C4;border-bottom:none"></div>
<div style="left:721px;top:653px;width:16px;height:43px;background:linear-gradient(#F7C2A9,#F4A27C);border:1px solid #ED7D31"></div>
<div style="left:721px;top:387px;width:16px;height:267px;background:linear-gradient(#D4D4D4,#C2C2C2);border:1px solid #9A9A9A"></div>
<div id="t116" class="t" style="left:729.3px;width:0;display:flex;justify-content:center;top:880.0px;line-height:17px;font-size:13px;color:#6A6A6A;font-weight:normal;transform:scaleX(1.0546);transform-origin:50% 50%;"><span>2007</span></div>
<div style="left:758px;top:693px;width:16px;height:176px;background:linear-gradient(#A9B8E1,#8AA0DA);border:1px solid #4472C4;border-bottom:none"></div>
<div style="left:758px;top:649px;width:16px;height:45px;background:linear-gradient(#F7C2A9,#F4A27C);border:1px solid #ED7D31"></div>
<div style="left:758px;top:380px;width:16px;height:270px;background:linear-gradient(#D4D4D4,#C2C2C2);border:1px solid #9A9A9A"></div>
<div id="t117" class="t" style="left:766.4px;width:0;display:flex;justify-content:center;top:880.0px;line-height:17px;font-size:13px;color:#6A6A6A;font-weight:normal;transform:scaleX(1.0546);transform-origin:50% 50%;"><span>2008</span></div>
<div style="left:796px;top:690px;width:16px;height:179px;background:linear-gradient(#A9B8E1,#8AA0DA);border:1px solid #4472C4;border-bottom:none"></div>
<div style="left:796px;top:644px;width:16px;height:47px;background:linear-gradient(#F7C2A9,#F4A27C);border:1px solid #ED7D31"></div>
<div style="left:796px;top:376px;width:16px;height:269px;background:linear-gradient(#D4D4D4,#C2C2C2);border:1px solid #9A9A9A"></div>
<div id="t118" class="t" style="left:803.5px;width:0;display:flex;justify-content:center;top:880.0px;line-height:17px;font-size:13px;color:#6A6A6A;font-weight:normal;transform:scaleX(1.0546);transform-origin:50% 50%;"><span>2009</span></div>
<div style="left:833px;top:679px;width:16px;height:190px;background:linear-gradient(#A9B8E1,#8AA0DA);border:1px solid #4472C4;border-bottom:none"></div>
<div style="left:833px;top:632px;width:16px;height:48px;background:linear-gradient(#F7C2A9,#F4A27C);border:1px solid #ED7D31"></div>
<div style="left:833px;top:350px;width:16px;height:283px;background:linear-gradient(#D4D4D4,#C2C2C2);border:1px solid #9A9A9A"></div>
<div id="t119" class="t" style="left:840.6px;width:0;display:flex;justify-content:center;top:880.0px;line-height:17px;font-size:13px;color:#6A6A6A;font-weight:normal;transform:scaleX(1.0546);transform-origin:50% 50%;"><span>2010</span></div>
<div style="left:870px;top:683px;width:16px;height:186px;background:linear-gradient(#A9B8E1,#8AA0DA);border:1px solid #4472C4;border-bottom:none"></div>
<div style="left:870px;top:638px;width:16px;height:46px;background:linear-gradient(#F7C2A9,#F4A27C);border:1px solid #ED7D31"></div>
<div style="left:870px;top:375px;width:16px;height:264px;background:linear-gradient(#D4D4D4,#C2C2C2);border:1px solid #9A9A9A"></div>
<div id="t120" class="t" style="left:877.7px;width:0;display:flex;justify-content:center;top:880.0px;line-height:17px;font-size:13px;color:#6A6A6A;font-weight:normal;transform:scaleX(1.0905);transform-origin:50% 50%;"><span>2011</span></div>
<div style="left:907px;top:681px;width:16px;height:188px;background:linear-gradient(#A9B8E1,#8AA0DA);border:1px solid #4472C4;border-bottom:none"></div>
<div style="left:907px;top:635px;width:16px;height:47px;background:linear-gradient(#F7C2A9,#F4A27C);border:1px solid #ED7D31"></div>
<div style="left:907px;top:354px;width:16px;height:282px;background:linear-gradient(#D4D4D4,#C2C2C2);border:1px solid #9A9A9A"></div>
<div id="t121" class="t" style="left:914.7px;width:0;display:flex;justify-content:center;top:880.0px;line-height:17px;font-size:13px;color:#6A6A6A;font-weight:normal;transform:scaleX(1.0546);transform-origin:50% 50%;"><span>2012</span></div>
<div style="left:944px;top:679px;width:16px;height:190px;background:linear-gradient(#A9B8E1,#8AA0DA);border:1px solid #4472C4;border-bottom:none"></div>
<div style="left:944px;top:633px;width:16px;height:47px;background:linear-gradient(#F7C2A9,#F4A27C);border:1px solid #ED7D31"></div>
<div style="left:944px;top:346px;width:16px;height:288px;background:linear-gradient(#D4D4D4,#C2C2C2);border:1px solid #9A9A9A"></div>
<div id="t122" class="t" style="left:951.8px;width:0;display:flex;justify-content:center;top:880.0px;line-height:17px;font-size:13px;color:#6A6A6A;font-weight:normal;transform:scaleX(1.0546);transform-origin:50% 50%;"><span>2013</span></div>
<div style="left:981px;top:667px;width:16px;height:202px;background:linear-gradient(#A9B8E1,#8AA0DA);border:1px solid #4472C4;border-bottom:none"></div>
<div style="left:981px;top:618px;width:16px;height:50px;background:linear-gradient(#F7C2A9,#F4A27C);border:1px solid #ED7D31"></div>
<div style="left:981px;top:319px;width:16px;height:300px;background:linear-gradient(#D4D4D4,#C2C2C2);border:1px solid #9A9A9A"></div>
<div id="t123" class="t" style="left:988.9px;width:0;display:flex;justify-content:center;top:880.0px;line-height:17px;font-size:13px;color:#6A6A6A;font-weight:normal;transform:scaleX(1.0546);transform-origin:50% 50%;"><span>2014</span></div>
<div style="left:1018px;top:669px;width:16px;height:200px;background:linear-gradient(#A9B8E1,#8AA0DA);border:1px solid #4472C4;border-bottom:none"></div>
<div style="left:1018px;top:621px;width:16px;height:49px;background:linear-gradient(#F7C2A9,#F4A27C);border:1px solid #ED7D31"></div>
<div style="left:1018px;top:319px;width:16px;height:303px;background:linear-gradient(#D4D4D4,#C2C2C2);border:1px solid #9A9A9A"></div>
<div id="t124" class="t" style="left:1026.0px;width:0;display:flex;justify-content:center;top:880.0px;line-height:17px;font-size:13px;color:#6A6A6A;font-weight:normal;transform:scaleX(1.0546);transform-origin:50% 50%;"><span>2015</span></div>
<div style="left:1055px;top:676px;width:16px;height:193px;background:linear-gradient(#A9B8E1,#8AA0DA);border:1px solid #4472C4;border-bottom:none"></div>
<div style="left:1055px;top:631px;width:16px;height:46px;background:linear-gradient(#F7C2A9,#F4A27C);border:1px solid #ED7D31"></div>
<div style="left:1055px;top:333px;width:16px;height:299px;background:linear-gradient(#D4D4D4,#C2C2C2);border:1px solid #9A9A9A"></div>
<div id="t125" class="t" style="left:1063.1px;width:0;display:flex;justify-content:center;top:880.0px;line-height:17px;font-size:13px;color:#6A6A6A;font-weight:normal;transform:scaleX(1.0546);transform-origin:50% 50%;"><span>2016</span></div>
<div style="left:1092px;top:672px;width:16px;height:197px;background:linear-gradient(#A9B8E1,#8AA0DA);border:1px solid #4472C4;border-bottom:none"></div>
<div style="left:1092px;top:625px;width:16px;height:48px;background:linear-gradient(#F7C2A9,#F4A27C);border:1px solid #ED7D31"></div>
<div style="left:1092px;top:338px;width:16px;height:288px;background:linear-gradient(#D4D4D4,#C2C2C2);border:1px solid #9A9A9A"></div>
<div id="t126" class="t" style="left:1100.1px;width:0;display:flex;justify-content:center;top:880.0px;line-height:17px;font-size:13px;color:#6A6A6A;font-weight:normal;transform:scaleX(1.0546);transform-origin:50% 50%;"><span>2017</span></div>
<div style="left:1129px;top:669px;width:16px;height:200px;background:linear-gradient(#A9B8E1,#8AA0DA);border:1px solid #4472C4;border-bottom:none"></div>
<div style="left:1129px;top:621px;width:16px;height:49px;background:linear-gradient(#F7C2A9,#F4A27C);border:1px solid #ED7D31"></div>
<div style="left:1129px;top:330px;width:16px;height:292px;background:linear-gradient(#D4D4D4,#C2C2C2);border:1px solid #9A9A9A"></div>
<div id="t127" class="t" style="left:1137.2px;width:0;display:flex;justify-content:center;top:880.0px;line-height:17px;font-size:13px;color:#6A6A6A;font-weight:normal;transform:scaleX(1.0546);transform-origin:50% 50%;"><span>2018</span></div>
<div style="left:1166px;top:664px;width:16px;height:205px;background:linear-gradient(#A9B8E1,#8AA0DA);border:1px solid #4472C4;border-bottom:none"></div>
<div style="left:1166px;top:615px;width:16px;height:50px;background:linear-gradient(#F7C2A9,#F4A27C);border:1px solid #ED7D31"></div>
<div style="left:1166px;top:320px;width:16px;height:296px;background:linear-gradient(#D4D4D4,#C2C2C2);border:1px solid #9A9A9A"></div>
<div id="t128" class="t" style="left:1174.3px;width:0;display:flex;justify-content:center;top:880.0px;line-height:17px;font-size:13px;color:#6A6A6A;font-weight:normal;transform:scaleX(1.0546);transform-origin:50% 50%;"><span>2019</span></div>
<div style="left:1203px;top:662px;width:16px;height:207px;background:linear-gradient(#A9B8E1,#8AA0DA);border:1px solid #4472C4;border-bottom:none"></div>
<div style="left:1203px;top:615px;width:16px;height:48px;background:linear-gradient(#F7C2A9,#F4A27C);border:1px solid #ED7D31"></div>
<div style="left:1203px;top:315px;width:16px;height:301px;background:linear-gradient(#D4D4D4,#C2C2C2);border:1px solid #9A9A9A"></div>
<div id="t129" class="t" style="left:1211.4px;width:0;display:flex;justify-content:center;top:880.0px;line-height:17px;font-size:13px;color:#6A6A6A;font-weight:normal;transform:scaleX(1.0546);transform-origin:50% 50%;"><span>2020</span></div>
<div style="left:1240px;top:666px;width:16px;height:203px;background:linear-gradient(#A9B8E1,#8AA0DA);border:1px solid #4472C4;border-bottom:none"></div>
<div style="left:1240px;top:617px;width:16px;height:50px;background:linear-gradient(#F7C2A9,#F4A27C);border:1px solid #ED7D31"></div>
<div style="left:1240px;top:317px;width:16px;height:301px;background:linear-gradient(#D4D4D4,#C2C2C2);border:1px solid #9A9A9A"></div>
<div id="t130" class="t" style="left:1248.5px;width:0;display:flex;justify-content:center;top:880.0px;line-height:17px;font-size:13px;color:#6A6A6A;font-weight:normal;transform:scaleX(1.0546);transform-origin:50% 50%;"><span>2021</span></div>
<div style="left:1278px;top:655px;width:16px;height:214px;background:linear-gradient(#A9B8E1,#8AA0DA);border:1px solid #4472C4;border-bottom:none"></div>
<div style="left:1278px;top:605px;width:16px;height:51px;background:linear-gradient(#F7C2A9,#F4A27C);border:1px solid #ED7D31"></div>
<div style="left:1278px;top:294px;width:16px;height:312px;background:linear-gradient(#D4D4D4,#C2C2C2);border:1px solid #9A9A9A"></div>
<div id="t131" class="t" style="left:1285.5px;width:0;display:flex;justify-content:center;top:880.0px;line-height:17px;font-size:13px;color:#6A6A6A;font-weight:normal;transform:scaleX(1.0546);transform-origin:50% 50%;"><span>2022</span></div>
<div style="left:525.5px;top:869px;width:778px;height:1px;background:#D9D9D9"></div>
<div style="left:1329px;top:516px;width:10px;height:10px;background:#CBCBCB;border:1px solid #9A9A9A"></div>
<div id="t132" class="t" style="left:1342px;top:512.0px;line-height:18px;font-size:14px;color:#7A7A7A;font-weight:normal;transform:scaleX(1.0536);transform-origin:0 50%;"><span>基礎研究</span></div>
<div style="left:1329px;top:544px;width:10px;height:10px;background:#F6B699;border:1px solid #ED7D31"></div>
<div id="t133" class="t" style="left:1342px;top:540.0px;line-height:18px;font-size:14px;color:#7A7A7A;font-weight:normal;transform:scaleX(1.0536);transform-origin:0 50%;"><span>開発研究</span></div>
<div style="left:1329px;top:572px;width:10px;height:10px;background:#9DAEDE;border:1px solid #4472C4"></div>
<div id="t134" class="t" style="left:1342px;top:568.0px;line-height:18px;font-size:14px;color:#7A7A7A;font-weight:normal;transform:scaleX(1.0536);transform-origin:0 50%;"><span>応用研究</span></div>
<div style="left:430.5px;top:126.5px;width:14px;height:14px;background:#fff;border:2px solid #5F5F5F;border-radius:50%"></div>
<div style="left:934px;top:126.5px;width:14px;height:14px;background:#fff;border:2px solid #5F5F5F;border-radius:50%"></div>
<div style="left:1437px;top:126.5px;width:14px;height:14px;background:#fff;border:2px solid #5F5F5F;border-radius:50%"></div>
<div style="left:430.5px;top:531.0px;width:14px;height:14px;background:#fff;border:2px solid #5F5F5F;border-radius:50%"></div>
<div style="left:1437px;top:531.0px;width:14px;height:14px;background:#fff;border:2px solid #5F5F5F;border-radius:50%"></div>
<div style="left:430.5px;top:936.0px;width:14px;height:14px;background:#fff;border:2px solid #5F5F5F;border-radius:50%"></div>
<div style="left:934px;top:936.0px;width:14px;height:14px;background:#fff;border:2px solid #5F5F5F;border-radius:50%"></div>
<div style="left:1437px;top:936.0px;width:14px;height:14px;background:#fff;border:2px solid #5F5F5F;border-radius:50%"></div>
<svg style="position:absolute;left:30px;top:965px;" width="12" height="14" viewBox="0 0 12 14"><path d="M9 1.5 L3 7 L9 12.5" fill="none" stroke="#8A8A8A" stroke-width="1.3"/></svg>
<svg style="position:absolute;left:70px;top:965px;" width="12" height="14" viewBox="0 0 12 14"><path d="M3 1.5 L9 7 L3 12.5" fill="none" stroke="#8A8A8A" stroke-width="1.3"/></svg>
<div id="t135" class="t" style="left:152px;top:960.0px;line-height:25px;font-size:19px;color:#262626;font-weight:normal;"><span>data</span></div>
<div style="left:207px;top:961px;width:1px;height:24px;background:#C8C8C8"></div>
<div style="left:213px;top:953px;width:66px;height:35px;background:#fff;border-radius:0 0 7px 7px"></div>
<div id="t136" class="t" style="left:226px;top:957.5px;line-height:25px;font-size:19px;color:#262626;font-weight:normal;transform:scaleX(1.0214);transform-origin:0 50%;"><span>pivot</span></div>
<div style="left:223px;top:983px;width:46px;height:2px;background:#117C41"></div>
<div style="left:284px;top:961px;width:1px;height:24px;background:#C8C8C8"></div>
<svg style="position:absolute;left:336px;top:963px;" width="16" height="16" viewBox="0 0 16 16"><path d="M8 1 V15 M1 8 H15" stroke="#262626" stroke-width="1.6"/></svg>
<div style="left:892px;top:967px;width:3px;height:3px;background:#262626"></div>
<div style="left:892px;top:972px;width:3px;height:3px;background:#262626"></div>
<div style="left:892px;top:977px;width:3px;height:3px;background:#262626"></div>
<div style="left:914px;top:962px;width:545px;height:21px;background:#F3F3F3;border-radius:10px"></div>
<div style="left:935px;top:967px;width:473px;height:11px;background:#717171;border-radius:6px"></div>
<svg style="position:absolute;left:918px;top:966px;" width="12" height="13" viewBox="0 0 12 13"><path d="M10 1.5 L2 6.5 L10 11.5 Z" fill="#717171" stroke="#717171" stroke-linejoin="round"/></svg>
<svg style="position:absolute;left:1443px;top:966px;" width="12" height="13" viewBox="0 0 12 13"><path d="M2 1.5 L10 6.5 L2 11.5 Z" fill="#717171" stroke="#717171" stroke-linejoin="round"/></svg>
<div style="left:1482px;top:98px;width:438px;height:892px;background:#F0F0F0"></div>
<div style="left:1482px;top:98px;width:1px;height:892px;background:#B9BBBE"></div>
<div id="t137" class="t" style="left:1494px;top:110.5px;line-height:32px;font-size:25px;color:#262626;font-weight:300;transform:scaleX(0.7715);transform-origin:0 50%;"><span>ピボットグラフのフィールド</span></div>
<svg style="position:absolute;left:1841px;top:120px;" width="20" height="16" viewBox="0 0 20 16"><path d="M2.2 5.3 L10.5 13.6 L18.8 5.3" fill="none" stroke="#1E1E1E" stroke-width="1.4"/></svg>
<svg style="position:absolute;left:1883px;top:120px;" width="18" height="18" viewBox="0 0 18 18"><path d="M3.2 3.2 L14.6 14.8 M14.6 3.2 L3.2 14.8" stroke="#1E1E1E" stroke-width="1.4"/></svg>
<div id="t138" class="t" style="left:1500px;top:156.5px;line-height:18px;font-size:14px;color:#1A1A1A;font-weight:bold;transform:scaleX(0.8429);transform-origin:0 50%;"><span>アクティブ</span></div>
<div id="t139" class="t" style="left:1589px;top:156.5px;line-height:18px;font-size:14px;color:#262626;font-weight:normal;transform:scaleX(0.8333);transform-origin:0 50%;"><span>すべて</span></div>
<div style="left:1498px;top:183px;width:62px;height:3px;background:#107C41"></div>
<div id="t140" class="t" style="left:1499px;top:201.0px;line-height:18px;font-size:14px;color:#262626;font-weight:normal;transform:scaleX(0.8438);transform-origin:0 50%;"><span>レポートに追加するフィールドを選択してください:</span></div>
<div style="left:1848px;top:191px;width:57px;height:35px;background:#fff;border:1px solid #858585"></div>
<svg style="position:absolute;left:1858px;top:196px;" width="24" height="24" viewBox="0 0 24 24"><path d="M21.74 9.75 L21.74 14.25 L18.86 14.77 L17.83 16.56 L18.82 19.31 L14.92 21.56 L13.03 19.33 L10.97 19.33 L9.08 21.56 L5.18 19.31 L6.17 16.56 L5.14 14.77 L2.26 14.25 L2.26 9.75 L5.14 9.23 L6.17 7.44 L5.18 4.69 L9.08 2.44 L10.97 4.67 L13.03 4.67 L14.92 2.44 L18.82 4.69 L17.83 7.44 L18.86 9.23 Z" fill="none" stroke="#404040" stroke-width="1.2" stroke-linejoin="round"/><circle cx="12" cy="12" r="3.2" fill="none" stroke="#404040" stroke-width="1.3"/></svg>
<svg style="position:absolute;left:1889px;top:205px;" width="10" height="7" viewBox="0 0 10 7"><path d="M1.5 1.5 L5 5 L8.5 1.5" fill="none" stroke="#262626" stroke-width="1.3"/></svg>
<div style="left:1498px;top:243px;width:407px;height:30px;background:#fff;border:1px solid #A6A6A6"></div>
<div id="t141" class="t" style="left:1506px;top:248.5px;line-height:18px;font-size:14px;color:#8A8A8A;font-weight:normal;transform:scaleX(1.0714);transform-origin:0 50%;"><span>検索</span></div>
<svg style="position:absolute;left:1878px;top:245px;" width="22" height="25" viewBox="0 0 22 25"><circle cx="14.5" cy="9.5" r="6.3" fill="none" stroke="#404040" stroke-width="1.4"/><path d="M10 14 L3 21.5" stroke="#404040" stroke-width="1.6"/></svg>
<div style="left:1498px;top:295px;width:408px;height:250px;background:#fff;border:1px solid #A0A0A0"></div>
<div style="left:1883px;top:296px;width:22px;height:248px;background:#F3F3F3"></div>
<svg style="position:absolute;left:1883px;top:300px;" width="22" height="12" viewBox="0 0 22 12"><path d="M6.5 9.5 L11 4 L15.5 9.5 Z" fill="#717171" stroke="#717171" stroke-linejoin="round"/></svg>
<div style="left:1888px;top:317px;width:11px;height:181px;background:#717171"></div>
<svg style="position:absolute;left:1883px;top:526px;" width="22" height="14" viewBox="0 0 22 14"><path d="M6.5 4 L11 9.5 L15.5 4 Z" fill="#717171" stroke="#717171" stroke-linejoin="round"/></svg>
<svg style="position:absolute;left:1506px;top:300px;" width="12" height="14" viewBox="0 0 12 14"><path d="M9.5 2 V10.5 H3" fill="none" stroke="#606060" stroke-width="1.6"/></svg>
<svg style="position:absolute;left:1521px;top:296px;" width="22" height="22" viewBox="0 0 22 22"><rect x="1.5" y="1.5" width="19" height="19" fill="#fff" stroke="#505050" stroke-width="1.3"/><rect x="2" y="2" width="18" height="3" fill="#909090"/><path d="M1.5 8.5 H20.5 M1.5 13 H20.5 M7.5 5 V20.5 M14 5 V20.5" stroke="#909090" stroke-width="1"/></svg>
<div id="t142" class="t" style="left:1545px;top:297.0px;line-height:21px;font-size:16px;color:#1A1A1A;font-weight:bold;transform:scaleX(1.0941);transform-origin:0 50%;"><span>_00200_soumu_00200543_a103_extra...</span></div>
<div style="left:1546px;top:320.5px;width:16px;height:16px;background:#fff;border:1px solid #707070"></div>
<div id="t143" class="t" style="left:1568.5px;top:318.5px;line-height:20px;font-size:15px;color:#262626;font-weight:normal;"><span>日付</span></div>
<div style="left:1546px;top:351.5px;width:16px;height:16px;background:#fff;border:1px solid #707070"></div>
<div id="t144" class="t" style="left:1568.5px;top:349.5px;line-height:20px;font-size:15px;color:#262626;font-weight:normal;transform:scaleX(1.0302);transform-origin:0 50%;"><span>組織_階層1</span></div>
<div style="left:1546px;top:382.5px;width:16px;height:16px;background:#fff;border:1px solid #707070"></div>
<div id="t145" class="t" style="left:1568.5px;top:380.5px;line-height:20px;font-size:15px;color:#262626;font-weight:normal;transform:scaleX(1.0302);transform-origin:0 50%;"><span>組織_階層2</span></div>
<div style="left:1546px;top:413.5px;width:16px;height:16px;background:#117C41"></div>
<svg style="position:absolute;left:1546px;top:413.5px;" width="16" height="16" viewBox="0 0 16 16"><path d="M3.5 8.5 L6.5 11.5 L12.5 5" fill="none" stroke="#fff" stroke-width="1.5"/></svg>
<div id="t146" class="t" style="left:1568.5px;top:411.5px;line-height:20px;font-size:15px;color:#262626;font-weight:bold;transform:scaleX(1.0222);transform-origin:0 50%;"><span>性格別研究費</span></div>
<div style="left:1546px;top:444.5px;width:16px;height:16px;background:#117C41"></div>
<svg style="position:absolute;left:1546px;top:444.5px;" width="16" height="16" viewBox="0 0 16 16"><path d="M3.5 8.5 L6.5 11.5 L12.5 5" fill="none" stroke="#fff" stroke-width="1.5"/></svg>
<div id="t147" class="t" style="left:1568.5px;top:442.5px;line-height:20px;font-size:15px;color:#262626;font-weight:bold;transform:scaleX(1.0559);transform-origin:0 50%;"><span>研究費 (百万円)</span></div>
<div style="left:1546px;top:475.5px;width:16px;height:16px;background:#117C41"></div>
<svg style="position:absolute;left:1546px;top:475.5px;" width="16" height="16" viewBox="0 0 16 16"><path d="M3.5 8.5 L6.5 11.5 L12.5 5" fill="none" stroke="#fff" stroke-width="1.5"/></svg>
<div id="t148" class="t" style="left:1568.5px;top:473.5px;line-height:20px;font-size:15px;color:#262626;font-weight:bold;transform:scaleX(1.0985);transform-origin:0 50%;"><span>日付 (年)</span></div>
<div style="left:1546px;top:506.5px;width:16px;height:16px;background:#fff;border:1px solid #707070"></div>
<div id="t149" class="t" style="left:1568.5px;top:504.5px;line-height:20px;font-size:15px;color:#262626;font-weight:normal;transform:scaleX(1.0654);transform-origin:0 50%;"><span>日付 (四半期)</span></div>
<div style="left:1546px;top:537.5px;width:16px;height:16px;background:#fff;border:1px solid #707070"></div>
<div id="t150" class="t" style="left:1568.5px;top:535.5px;line-height:20px;font-size:15px;color:#262626;font-weight:normal;transform:scaleX(1.0985);transform-origin:0 50%;"><span>日付 (月)</span></div>
<div style="left:1498px;top:545px;width:408px;height:18px;background:#F0F0F0"></div>
<div style="left:1498px;top:544px;width:408px;height:1px;background:#A0A0A0"></div>
<div style="left:1883px;top:540px;width:22px;height:4px;background:#F3F3F3"></div>
<svg style="position:absolute;left:1861px;top:350px;" width="19" height="19" viewBox="0 0 19 19"><path d="M1.5 2 H17.5 L11 9.5 V17 L8 15.5 V9.5 Z" fill="none" stroke="#404040" stroke-width="1.3" stroke-linejoin="round"/></svg>
<div style="left:1500px;top:564px;width:410px;height:1px;background-image:repeating-linear-gradient(to right,#B4B4B4 0 1px,transparent 1px 4px)"></div>
<div id="t151" class="t" style="left:1503px;top:570.0px;line-height:18px;font-size:14px;color:#262626;font-weight:normal;transform:scaleX(0.7944);transform-origin:0 50%;"><span>次のボックス間でフィールドをドラッグしてください:</span></div>
<div style="left:1703px;top:610px;width:1px;height:315px;background:#C6C6C6"></div>
<div style="left:1502px;top:767px;width:404px;height:1px;background:#C6C6C6"></div>
<div style="left:1502px;top:636px;width:194px;height:124px;background:#fff"></div>
<div style="left:1706px;top:636px;width:200px;height:124px;background:#fff"></div>
<div style="left:1502px;top:801px;width:194px;height:124px;background:#fff"></div>
<div style="left:1706px;top:801px;width:200px;height:124px;background:#fff"></div>
<svg style="position:absolute;left:1506px;top:612px;" width="16" height="16" viewBox="0 0 16 16"><path d="M1 1.5 H15 L10 7.5 V14.5 H6 V7.5 Z" fill="#8A8A8A"/></svg>
<div id="t152" class="t" style="left:1530px;top:612.0px;line-height:18px;font-size:14px;color:#262626;font-weight:normal;transform:scaleX(0.7286);transform-origin:0 50%;"><span>フィルター</span></div>
<svg style="position:absolute;left:1712px;top:613px;" width="12" height="14" viewBox="0 0 12 14"><rect x="1" y="1" width="3" height="12" fill="#8A8A8A"/><path d="M6 1 V13 M8.5 1 V13 M11 1 V13" stroke="#8A8A8A" stroke-width="1"/></svg>
<div id="t153" class="t" style="left:1734px;top:612.0px;line-height:18px;font-size:14px;color:#262626;font-weight:normal;transform:scaleX(1.1269);transform-origin:0 50%;"><span>凡例 (系列)</span></div>
<svg style="position:absolute;left:1507px;top:778px;" width="14" height="14" viewBox="0 0 14 14"><path d="M1 2 H13 M1 5 H13 M1 8 H13 M1 11 H13" stroke="#8A8A8A" stroke-width="1.4"/></svg>
<div id="t154" class="t" style="left:1530px;top:777.0px;line-height:18px;font-size:14px;color:#262626;font-weight:normal;transform:scaleX(1.1175);transform-origin:0 50%;"><span>軸 (分類項目)</span></div>
<svg style="position:absolute;left:1711px;top:778px;" width="14" height="14" viewBox="0 0 14 14"><path d="M12.5 2 H1.5 L7 7 L1.5 12 H12.5" fill="none" stroke="#8A8A8A" stroke-width="1.5"/></svg>
<div id="t155" class="t" style="left:1734px;top:777.0px;line-height:18px;font-size:14px;color:#262626;font-weight:normal;transform:scaleX(1.0714);transform-origin:0 50%;"><span>値</span></div>
<div style="left:1707px;top:638px;width:198px;height:27px;background:#fff;border:1px solid #ABABAB"></div>
<div id="t156" class="t" style="left:1717.5px;top:642.5px;line-height:18px;font-size:14px;color:#262626;font-weight:normal;transform:scaleX(1.0595);transform-origin:0 50%;"><span>性格別研究費</span></div>
<svg style="position:absolute;left:1886px;top:648px;" width="10" height="8" viewBox="0 0 10 8"><path d="M1.5 1.5 L5 5 L8.5 1.5" fill="none" stroke="#262626" stroke-width="1.3"/></svg>
<div style="left:1503px;top:803px;width:192px;height:27px;background:#fff;border:1px solid #ABABAB"></div>
<div id="t157" class="t" style="left:1513.5px;top:807.5px;line-height:18px;font-size:14px;color:#262626;font-weight:normal;transform:scaleX(1.1409);transform-origin:0 50%;"><span>日付 (年)</span></div>
<svg style="position:absolute;left:1676px;top:813px;" width="10" height="8" viewBox="0 0 10 8"><path d="M1.5 1.5 L5 5 L8.5 1.5" fill="none" stroke="#262626" stroke-width="1.3"/></svg>
<div style="left:1707px;top:803px;width:198px;height:27px;background:#fff;border:1px solid #ABABAB"></div>
<div id="t158" class="t" style="left:1717.5px;top:807.5px;line-height:18px;font-size:14px;color:#262626;font-weight:normal;transform:scaleX(1.1688);transform-origin:0 50%;"><span>合計 / 研究費 (百万円)</span></div>
<svg style="position:absolute;left:1886px;top:813px;" width="10" height="8" viewBox="0 0 10 8"><path d="M1.5 1.5 L5 5 L8.5 1.5" fill="none" stroke="#262626" stroke-width="1.3"/></svg>
<div style="left:1506px;top:958px;width:16px;height:16px;background:#fff;border:1px solid #707070;border-radius:2px"></div>
<div id="t159" class="t" style="left:1530px;top:957.5px;line-height:18px;font-size:14px;color:#262626;font-weight:normal;transform:scaleX(0.8901);transform-origin:0 50%;"><span>レイアウトの更新を保留する</span></div>
<div style="left:1862px;top:950px;width:44px;height:31px;border:1px solid #D4D4D4"></div>
<div id="t160" class="t" style="left:1868px;top:957.0px;line-height:18px;font-size:14px;color:#A6A6A6;font-weight:normal;transform:scaleX(1.1071);transform-origin:0 50%;"><span>更新</span></div>
</body></html>
